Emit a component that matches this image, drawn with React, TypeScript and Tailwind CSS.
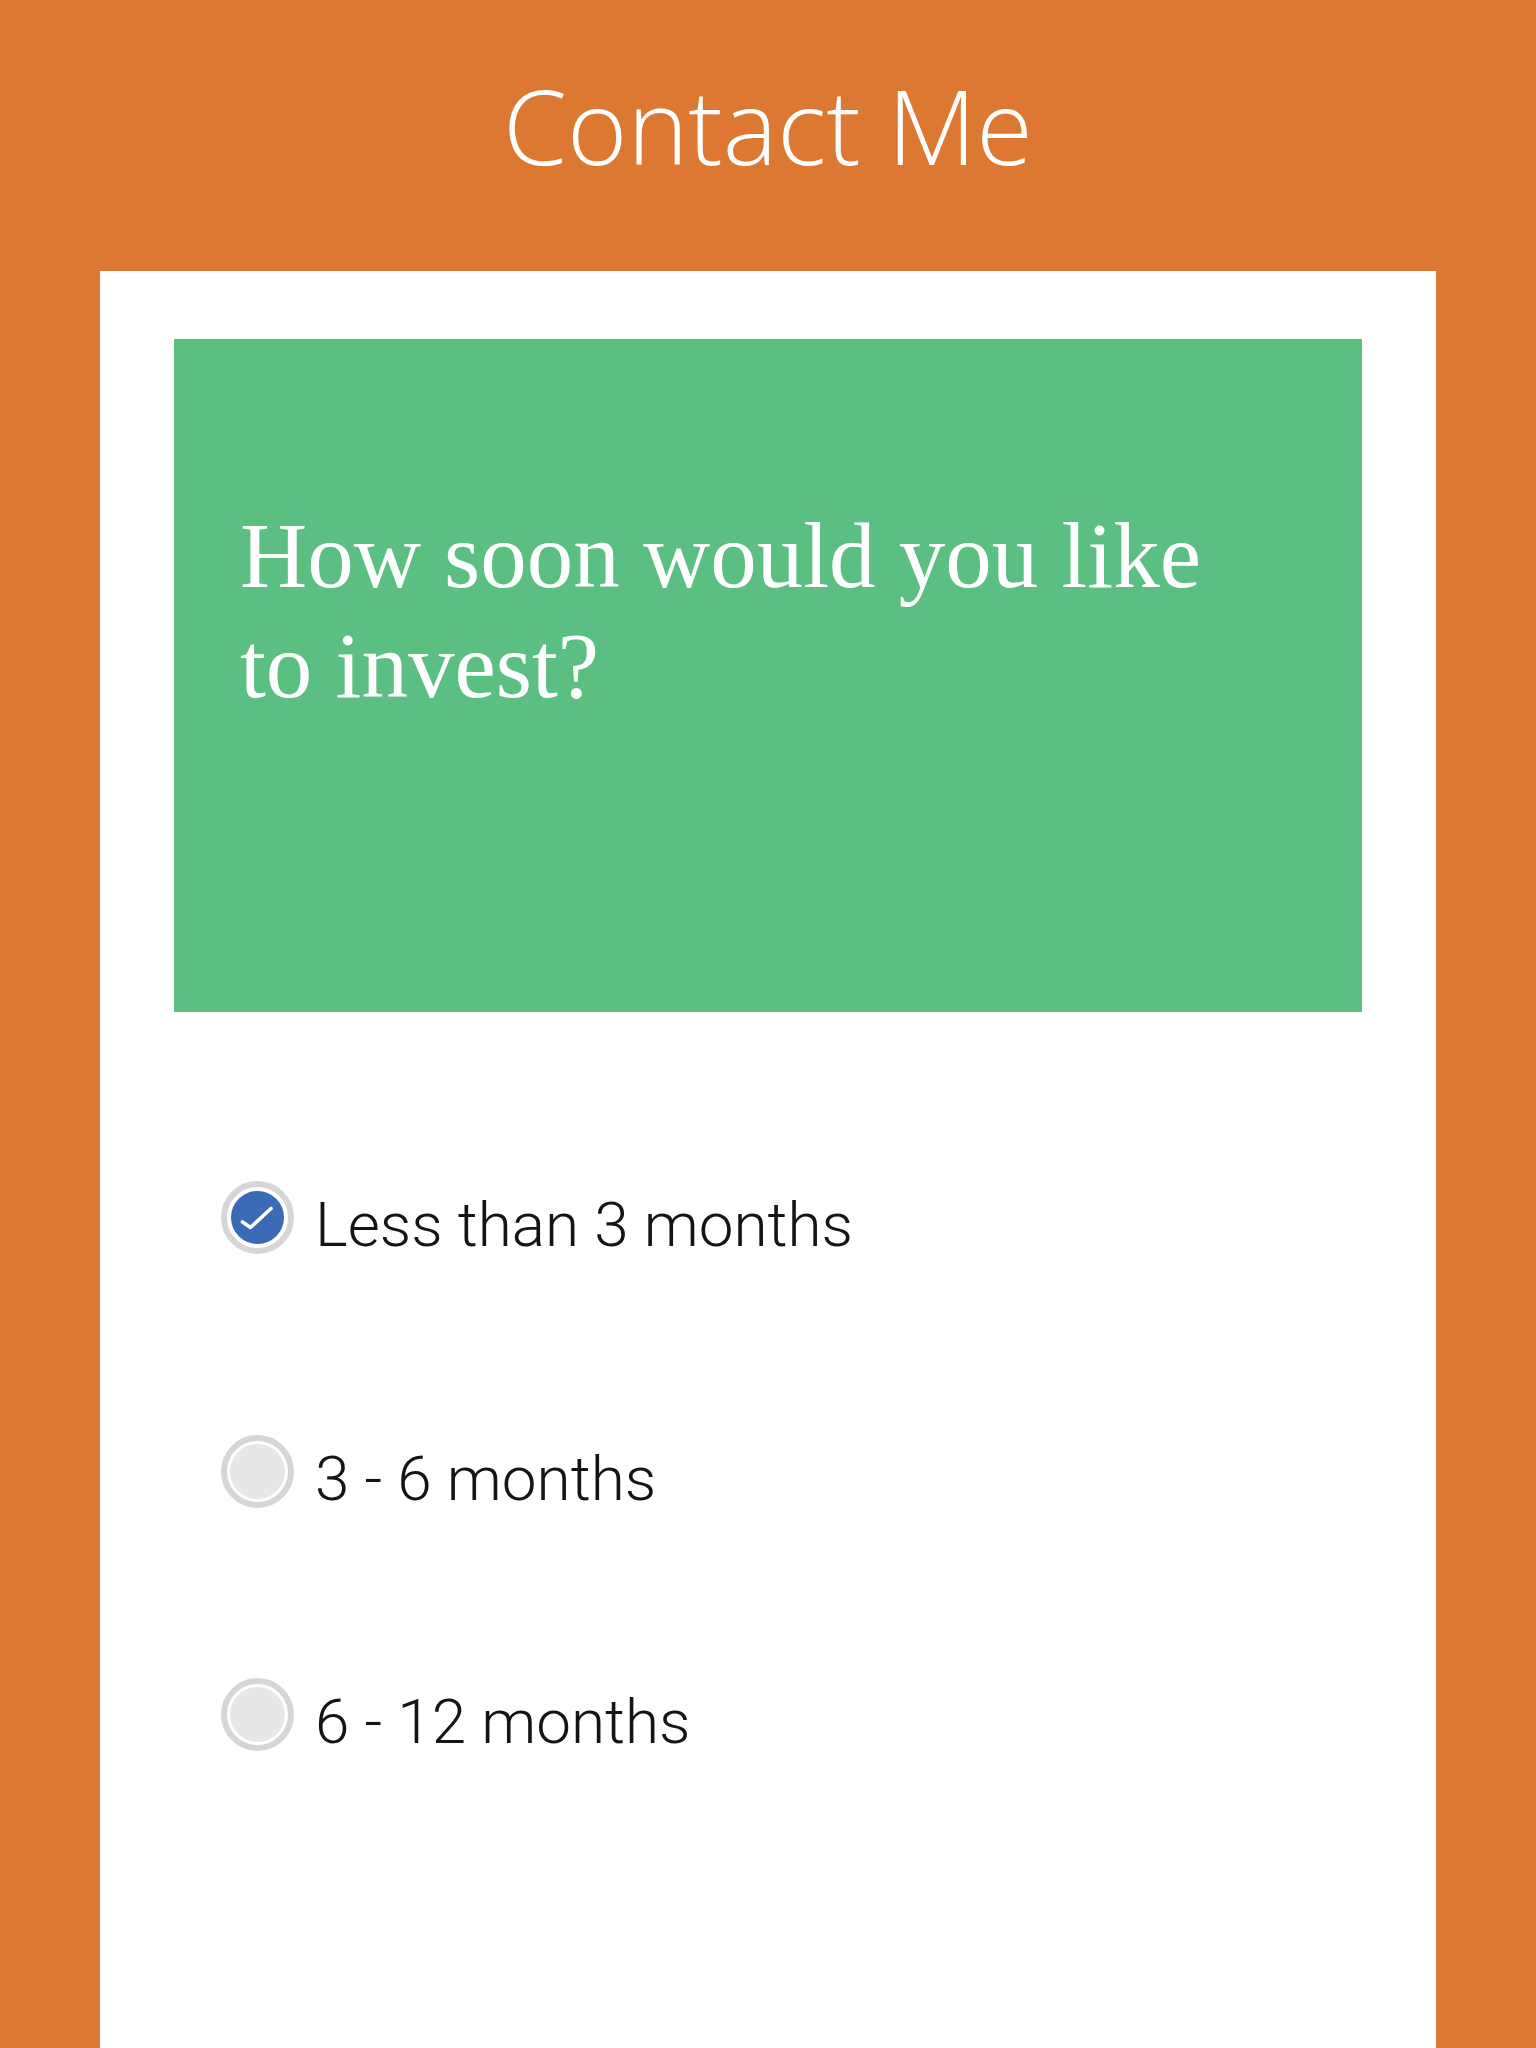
import React from "react";

function Radio({ checked }: { checked: boolean }) {
  return (
    <div className="w-[73px] h-[73px] shrink-0 rounded-full border-[6px] border-[#d6d6d6] bg-white flex items-center justify-center">
      {checked ? (
        <div className="w-[53px] h-[53px] rounded-full bg-[#3b6bb6]">
          <svg width="53" height="53" viewBox="0 0 53 53">
            <path d="M11.5 31 L19.5 36.5 L40 17.5" fill="none" stroke="#ffffff" strokeWidth="3.6" strokeLinecap="round" strokeLinejoin="round" />
          </svg>
        </div>
      ) : (
        <div className="w-[55px] h-[55px] rounded-full bg-[#e6e7e9]" />
      )}
    </div>
  );
}

function Option({ label, checked, className }: { label: string; checked: boolean; className: string }) {
  return (
    <div className={"flex items-start " + className}>
      <Radio checked={checked} />
      <span className="ml-[21px] mt-[13px] text-[62px] leading-none font-light text-[#141414] font-['Roboto',sans-serif]">
        {label}
      </span>
    </div>
  );
}

export default function App() {
  return (
    <div className="w-[1536px] min-h-[2048px] bg-[#dd7833] flex flex-col">
      <header className="h-[271px] pt-[74px] shrink-0">
        <h1 className="text-center text-white text-[103px] leading-none font-light font-['Open_Sans',sans-serif]">
          Contact Me
        </h1>
      </header>
      <main className="mx-[100px] flex-1 bg-white min-h-[1777px] pt-[68px] px-[74px]">
        <section className="h-[673px] bg-[#5bbf82] pt-[162px] pl-[66px] pr-[140px]">
          <h2 className="text-white text-[93px] leading-[110px] font-['Liberation_Serif',serif]">
            How soon would you like to invest?
          </h2>
        </section>
        <div className="pl-[47px] flex flex-col">
          <Option label="Less than 3 months" checked className="mt-[169px]" />
          <Option label="3 - 6 months" checked={false} className="mt-[179px]" />
          <Option label="6 - 12 months" checked={false} className="mt-[168px]" />
        </div>
      </main>
    </div>
  );
}
